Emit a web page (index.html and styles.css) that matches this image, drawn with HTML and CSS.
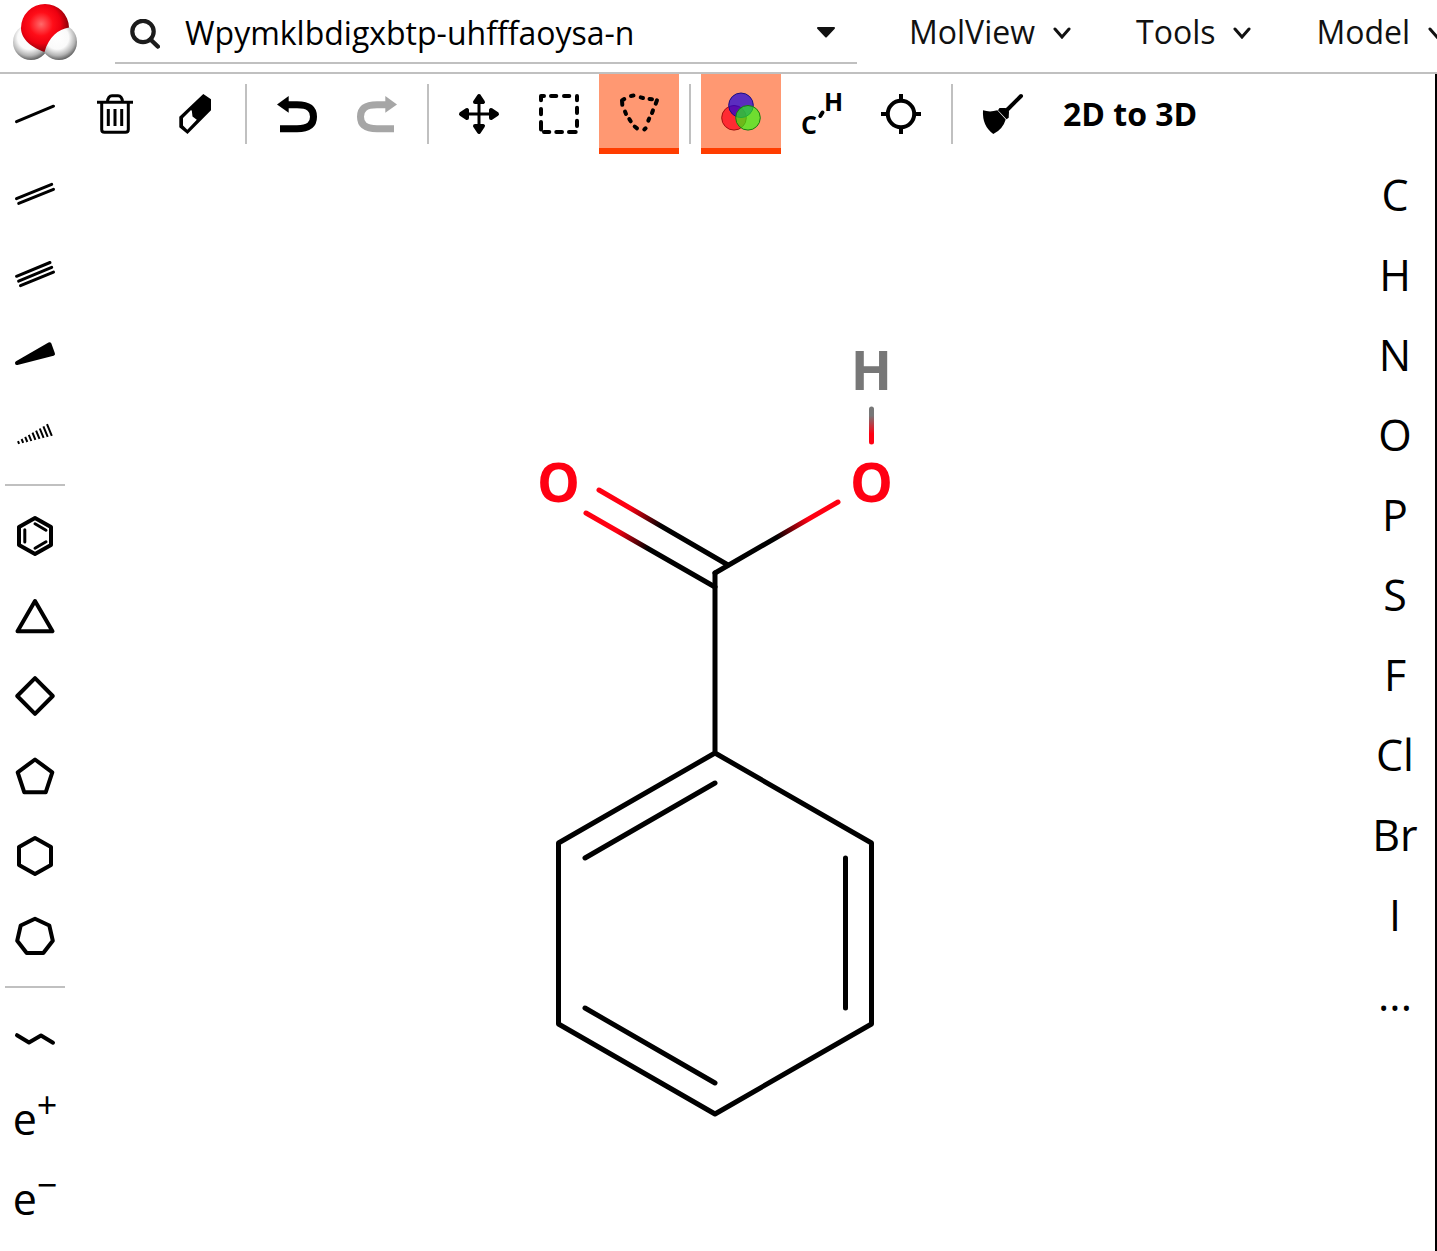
FILE: index.html
```html
<!DOCTYPE html>
<html lang="en">
<head>
<meta charset="utf-8">
<title>MolView</title>
<link rel="stylesheet" href="styles.css">
</head>
<body>
<header class="topbar">
  <a class="logo" href="#" aria-label="MolView home">
    <svg width="64" height="56" viewBox="0 0 64 56">
      <defs>
        <radialGradient id="red" cx="42%" cy="42%" r="62%"><stop offset="0" stop-color="#ff6a6a"/><stop offset=".4" stop-color="#ff0d18"/><stop offset=".65" stop-color="#ee0010"/><stop offset="1" stop-color="#700006"/></radialGradient>
        <radialGradient id="white" cx="45%" cy="38%" r="64%"><stop offset="0" stop-color="#fff"/><stop offset=".5" stop-color="#fafafa"/><stop offset=".78" stop-color="#b4b4b4"/><stop offset="1" stop-color="#555"/></radialGradient>
      </defs>
      <circle cx="18" cy="38" r="18" fill="url(#white)"/>
      <circle cx="46" cy="38" r="18" fill="url(#white)"/>
      <path d="M32 0a24 24 0 0 1 24 23.500c-11 2-20 9-24.500 24.500C20 44 8 36 8 24A24 24 0 0 1 32 0z" fill="url(#red)"/>
    </svg>
  </a>
  <form class="search" role="search">
    <svg class="search-icon" width="30" height="30" viewBox="0 0 30 30" fill="none" stroke="#1c1c1c"><circle cx="13" cy="12.500" r="10.700" stroke-width="4.200"/><path d="M20.500 20.500l7.300 7" stroke-width="4.500" stroke-linecap="round"/></svg>
    <input class="search-input" type="text" aria-label="Search" value="Wpymklbdigxbtp-uhfffaoysa-n">
    <button class="search-more" type="button" aria-label="Search options">
      <svg width="20" height="12" viewBox="0 0 20 12"><path d="M2 2h16l-8 8.500z" fill="#111" stroke="#111" stroke-width="2" stroke-linejoin="round"/></svg>
    </button>
  </form>
  <nav class="menus">
    <button class="menu" type="button">MolView <svg class="chevron" width="18" height="12" viewBox="0 0 18 12"><path d="M2 2l7 8 7-8"/></svg></button>
    <button class="menu" type="button">Tools <svg class="chevron" width="18" height="12" viewBox="0 0 18 12"><path d="M2 2l7 8 7-8"/></svg></button>
    <button class="menu" type="button">Model <svg class="chevron" width="18" height="12" viewBox="0 0 18 12"><path d="M2 2l7 8 7-8"/></svg></button>
  </nav>
</header>
<main class="sketcher">
  <aside class="bonds">
    <button class="tool" aria-label="Single bond"><svg class="icon line" viewBox="0 0 40 40"><path d="M1.500 27.600L38.500 12.200"/></svg></button>
    <button class="tool" aria-label="Double bond"><svg class="icon line" viewBox="0 0 40 40"><path d="M1.500 24.700L36.700 10.300M3.700 29.400L38.500 15.300"/></svg></button>
    <button class="tool" aria-label="Triple bond"><svg class="icon line" viewBox="0 0 40 40"><path d="M1.500 22.300L35 8.500M3.600 27.100L36.700 13.300M5.500 31.700L38.500 18.100"/></svg></button>
    <button class="tool" aria-label="Wedge bond"><svg class="icon solid" viewBox="0 0 40 40"><path d="M2 29L34.500 10.300L38 19.900z" stroke-width="4"/></svg></button>
    <button class="tool" aria-label="Hash bond"><svg class="icon hash" viewBox="0 0 40 40"><path d="M3 27.100l1.100 2.700M6.600 25l1.600 3.900M10.200 22.900l2.100 5.100M13.800 20.800l2.500 6.200M17.500 18.700l2.900 7.200M21.100 16.600l3.400 8.300M24.800 14.500l3.800 9.400M28.400 12.300l4.300 10.600M32 10.200l4.800 11.700"/></svg></button>
    <hr class="rule">
    <button class="tool" aria-label="Benzene"><svg class="icon ring" viewBox="0 0 40 40"><path d="M20 2L36 11V29L20 38L4 29V11z"/><path d="M9.800 13.800V26M20 7.700L31 14.200M20 32.200L31 25.700" stroke-width="3"/></svg></button>
    <button class="tool" aria-label="Cyclopropane"><svg class="icon ring" viewBox="0 0 40 40"><path d="M20 5L37.500 35.300H2.500z"/></svg></button>
    <button class="tool" aria-label="Cyclobutane"><svg class="icon ring" viewBox="0 0 40 40"><path d="M20 2.200L37.800 20L20 37.800L2.200 20z"/></svg></button>
    <button class="tool" aria-label="Cyclopentane"><svg class="icon ring" viewBox="0 0 40 40"><path d="M20 3.500L37.300 16.300L30.700 36.300H9.300L2.700 16.300z"/></svg></button>
    <button class="tool" aria-label="Cyclohexane"><svg class="icon ring" viewBox="0 0 40 40"><path d="M20 2L36 11V29L20 38L4 29V11z"/></svg></button>
    <button class="tool" aria-label="Cycloheptane"><svg class="icon ring" viewBox="0 0 40 40"><path d="M20 2.800L34.300 9.500L37.800 24.800L28.300 37H11.700L2.200 24.800L5.700 9.500z"/></svg></button>
    <hr class="rule">
    <button class="tool" aria-label="Chain"><svg class="icon ring" viewBox="0 0 40 40"><path d="M2 17.200L14 24.500L26 17.500L38 24.700"/></svg></button>
    <button class="tool charge">e<span class="sign">+</span></button>
    <button class="tool charge">e<span class="sign">−</span></button>
  </aside>
  <section class="workspace">
    <div class="toolbar" role="toolbar">
      <button class="tool" aria-label="Clear all"><svg class="icon trash" viewBox="0 0 40 40"><path d="M2 8.300H38" stroke-width="3"/><path d="M12.500 8Q13 1.800 17 1.800H23Q27 1.800 27.500 8M6.700 9V35.500Q6.700 38.300 9.500 38.300H30.500Q33.300 38.300 33.300 35.500V9M13.300 15V32M20 15V32M26.700 15V32"/></svg></button>
      <button class="tool" aria-label="Erase"><svg class="icon" viewBox="0 0 40 40"><path fill-rule="evenodd" d="M28.300 0L36 5.300V16.300L12.500 40L4.300 33.300V22.700zM8 24V31.500L12.300 35.800L21.800 25.800L17.500 22.500L16.800 16.500L15.800 16.300z"/></svg></button>
      <span class="divider"></span>
      <button class="tool" aria-label="Undo"><svg class="icon" viewBox="0 0 40 40"><path d="M0 10.400L11.700 2V18.800z"/><path class="bend" d="M11 10.800H20C32 10.800 36.500 15 36.500 22.700S32 34.700 20 34.700H3"/></svg></button>
      <button class="tool" aria-label="Redo" disabled><svg class="icon faded" viewBox="0 0 40 40"><path d="M40 10.400L28.300 2V18.800z"/><path class="bend" d="M29 10.800H20C8 10.800 3.500 15 3.500 22.700S8 34.700 20 34.700H37"/></svg></button>
      <span class="divider"></span>
      <button class="tool" aria-label="Move"><svg class="icon solid" viewBox="0 0 40 40"><path d="M20 5V35M5 20H35" stroke-width="3"/><path d="M20 2L24 8H16zM20 38L24 32H16zM2 20L8 16V24zM38 20L32 16V24z" stroke-width="4"/></svg></button>
      <button class="tool" aria-label="Rectangle select"><svg class="icon dashed" viewBox="0 0 40 40"><path d="M5 2H2V6.300M12 2H17.300M25 2H30.300M38 2V6.300M38 13.700V19M38 26.700V32M36.700 38H30M23 38H17.300M10.300 38H5M2 35.500V28M2 20.300V15"/></svg></button>
      <button class="tool active" aria-label="Lasso select"><svg class="icon dashed" viewBox="0 0 40 40"><path d="M3.300 10.800L3 6.500L5.300 5M12 1.900L14.500 1.600M21.700 3.400L24 4M30.500 5L33 5.300M38 6.300L36.700 9.700M34 16.300L33 19M30.200 24.500L29.300 26.600M26.600 34.300L25.300 35.500M18 34.300L15.700 32.500M11.700 27.300L10.300 25M7 20L6 17.500"/></svg></button>
      <span class="divider"></span>
      <button class="tool active" aria-label="Color atoms"><svg class="icon" viewBox="0 0 40 40"><circle cx="13" cy="23.800" r="12.300" fill="#ff0019" fill-opacity=".72" stroke="#a01010"/><circle cx="20" cy="11.300" r="12.300" fill="#1500e0" fill-opacity=".7" stroke="#1a0e80"/><circle cx="27" cy="23.800" r="12.300" fill="#28ff10" fill-opacity=".67" stroke="#187a10"/></svg></button>
      <button class="tool" aria-label="Show hydrogens"><svg class="icon" viewBox="0 0 40 40"><text class="glyph" x="32.500" y="17">H</text><text class="glyph" x="8" y="40">C</text><path d="M21.500 18.500L19.300 22" stroke="#000" stroke-width="4" stroke-linecap="round"/></svg></button>
      <button class="tool" aria-label="Center"><svg class="icon target" viewBox="0 0 40 40"><circle cx="20" cy="20" r="13.200"/><path d="M20 0V7M20 33V40M0 20H7M33 20H40"/></svg></button>
      <span class="divider"></span>
      <button class="tool" aria-label="Clean up"><svg class="icon" viewBox="0 0 40 40"><path d="M38 2L24 16" stroke="#000" stroke-width="4" stroke-linecap="round"/><path d="M0 16.300Q7 18.500 14.300 16.300L22.700 25.400Q20 35 10.300 40Q-1 32 0 16.300z"/><path d="M15 16.300L16.500 14H22.500L26 17.500L25.700 23.700L23.500 25.200z"/></svg></button>
      <button class="tool convert">2D to 3D</button>
    </div>
    <div class="stage">
      <div class="canvas">
        <svg class="molecule" width="360" height="841" viewBox="535 282 360 841" role="img" aria-label="Benzoic acid">
          <defs>
            <linearGradient id="b1" gradientUnits="userSpaceOnUse" x1="599" y1="490" x2="728" y2="565"><stop offset=".24" stop-color="#ff0012"/><stop offset=".48"/></linearGradient>
            <linearGradient id="b2" gradientUnits="userSpaceOnUse" x1="586" y1="513" x2="715" y2="587"><stop offset=".24" stop-color="#ff0012"/><stop offset=".48"/></linearGradient>
            <linearGradient id="b3" gradientUnits="userSpaceOnUse" x1="715" y1="573" x2="838" y2="502"><stop offset=".5"/><stop offset=".76" stop-color="#ff0012"/></linearGradient>
            <linearGradient id="b4" gradientUnits="userSpaceOnUse" x1="871" y1="409" x2="871" y2="442"><stop offset=".2" stop-color="#777"/><stop offset=".75" stop-color="#ff0012"/></linearGradient>
          </defs>
          <path d="M599 490L728 565" stroke="url(#b1)"/>
          <path d="M586 513L715 587" stroke="url(#b2)"/>
          <path d="M715 573L838 502" stroke="url(#b3)"/>
          <path d="M869 409a2.500 2.500 0 0 1 5 0V442a2.500 2.500 0 0 1-5 0z" fill="url(#b4)" stroke="none"/>
          <path d="M715 573V753M715 753L871.500 843V1024L715 1114L558.500 1024V843zM715 783L585 858M845.500 858V1008M585 1008L715 1083"/>
          <text class="atom oxygen" x="558.500" y="502">O</text>
          <text class="atom oxygen" x="871.500" y="502">O</text>
          <text class="atom hydrogen" x="871.500" y="390">H</text>
        </svg>
      </div>
      <aside class="elements">
        <button class="tool">C</button>
        <button class="tool">H</button>
        <button class="tool">N</button>
        <button class="tool">O</button>
        <button class="tool">P</button>
        <button class="tool">S</button>
        <button class="tool">F</button>
        <button class="tool">Cl</button>
        <button class="tool">Br</button>
        <button class="tool">I</button>
        <button class="tool">...</button>
      </aside>
    </div>
  </section>
</main>
</body>
</html>
```
FILE: styles.css
```css
* { box-sizing: border-box; }

body {
  margin: 0;
  min-height: 100vh;
  display: flex;
  flex-direction: column;
  overflow-x: hidden;
  background: #fff;
  color: #000;
  font-family: "Open Sans", "Noto Sans", sans-serif;
  font-size: 32px;
}

button {
  margin: 0;
  padding: 0;
  border: 0;
  background: none;
  color: inherit;
  font: inherit;
}

/* Top bar */
.topbar {
  display: flex;
  height: 74px;
  border-bottom: 2px solid #c0c0c0;
  overflow: hidden;
  white-space: nowrap;
}

.logo {
  flex: none;
  width: 115px;
  padding: 4px 0 0 13px;
}

.logo svg { display: block; }

.search {
  flex: none;
  display: flex;
  align-items: center;
  width: 742px;
  height: 64px;
  padding: 2px 21px 0 15px;
  border-bottom: 2px solid #c0c0c0;
}

.search-icon { flex: none; margin-top: 4px; }

.search-input {
  flex: 1;
  min-width: 0;
  height: 60px;
  margin-left: 25px;
  padding: 0;
  border: 0;
  outline: 0;
  background: none;
  color: #000;
  font: inherit;
}

.search-more {
  display: flex;
  align-items: center;
  height: 60px;
}

.menus {
  flex: none;
  display: flex;
  gap: 65px;
  height: 62px;
  margin-left: 52px;
}

.menu {
  display: flex;
  align-items: center;
  gap: 18px;
  color: #111;
}

.chevron {
  margin-top: 4px;
  fill: none;
  stroke: #111;
  stroke-width: 3;
  stroke-linecap: round;
}

/* Sketcher frame */
.sketcher {
  flex: 1;
  display: flex;
  border-right: 2px solid #000;
}

.tool {
  flex: none;
  display: flex;
  align-items: center;
  justify-content: center;
  width: 80px;
  height: 80px;
}

.bonds {
  flex: none;
  display: flex;
  flex-direction: column;
  align-items: center;
  width: 75px;
  padding-right: 5px;
}

.bonds .tool { width: 70px; }

.rule {
  width: 60px;
  height: 2px;
  margin: 10px 0;
  border: 0;
  background: #c0c0c0;
}

.workspace {
  flex: 1;
  min-width: 0;
  display: flex;
  flex-direction: column;
}

.toolbar { display: flex; }

.divider {
  width: 2px;
  height: 60px;
  margin: 10px 10px 0;
  background: #c0c0c0;
}

.tool.active {
  padding-top: 6px;
  border-bottom: 6px solid #ff3d00;
  background: #ff9872;
}

.tool.convert {
  width: auto;
  padding: 0 20px 2px;
  font-weight: 700;
}

.stage { flex: 1; display: flex; }

.canvas {
  flex: 1;
  display: flex;
  align-items: center;
  justify-content: center;
}

.elements { flex: none; width: 80px; font-size: 43px; }

.charge { font-size: 43px; }

.sign { margin-bottom: 28px; font-size: 36px; }

/* Icons */
.icon { display: block; width: 40px; height: 40px; overflow: visible; }

.line,
.hash,
.ring,
.trash,
.dashed,
.target,
.bend { fill: none; stroke: #000; }

.line { stroke-width: 3; stroke-linecap: round; }
.hash { stroke-width: 2; }
.ring { stroke-width: 4; stroke-linecap: round; stroke-linejoin: round; }
.solid { stroke: #000; stroke-linejoin: round; }
.trash { stroke-width: 3; }
.dashed { stroke-width: 4; stroke-linecap: round; stroke-linejoin: round; }
.target { stroke-width: 4; }
.bend { stroke-width: 7; }
.faded { fill: #a6a6a6; }
.faded .bend { stroke: #a6a6a6; }
.glyph { font-size: 25px; font-weight: 700; text-anchor: middle; }

/* Molecule */
.molecule {
  fill: none;
  stroke: #000;
  stroke-width: 5;
  stroke-linecap: round;
  stroke-linejoin: round;
}

.atom {
  stroke: none;
  font-size: 54px;
  font-weight: 700;
  text-anchor: middle;
}

.oxygen { fill: #ff0012; }
.hydrogen { fill: #777; }
```
